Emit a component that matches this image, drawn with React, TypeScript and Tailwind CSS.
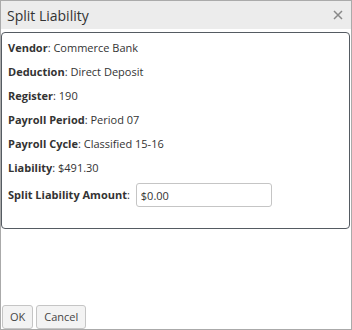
import React from 'react';

const rows: [string, string][] = [
  ['Vendor', 'Commerce Bank'],
  ['Deduction', 'Direct Deposit'],
  ['Register', '190'],
  ['Payroll Period', 'Period 07'],
  ['Payroll Cycle', 'Classified 15-16'],
  ['Liability', '$491.30'],
];

const App: React.FC = () => {
  return (
    <div
      className="w-[352px] h-[330px] bg-white border border-[#aaaaaa] flex flex-col text-[11px] text-[#333333]"
      style={{ fontFamily: '"Open Sans", "Liberation Sans", sans-serif' }}
    >
      {/* Title bar */}
      <div className="h-[28px] bg-[#ececec] flex items-center justify-between pl-[6px] pr-[8px] shrink-0">
        <span className="text-[14px] text-[#333333]">Split Liability</span>
        <svg width="10" height="10" viewBox="0 0 10 10" className="text-[#888888]">
          <path d="M1 1 L9 9 M9 1 L1 9" stroke="currentColor" strokeWidth="1.5" />
        </svg>
      </div>

      {/* Content */}
      <div className="flex-1 pt-[3px]">
        <div className="border border-[#555b62] rounded-[4px] mr-[1px] h-[197px] pl-[6px] pt-[3px]">
          {rows.map(([label, value]) => (
            <div key={label} className="h-[24px] flex items-center">
              <span className="font-bold">{label}</span>
              <span>: {value}</span>
            </div>
          ))}
          <div className="flex items-center mt-[3px]">
            <span className="font-bold">Split Liability Amount</span>
            <span>:</span>
            <input
              defaultValue="$0.00"
              className="ml-[6px] w-[136px] h-[24px] border border-[#c5c5c5] rounded-[3px] px-[4px] text-[11px] text-[#333333] outline-none"
            />
          </div>
        </div>
      </div>

      {/* Buttons */}
      <div className="flex gap-[3px] pl-[1px] shrink-0">
        <button className="h-[24px] px-[7px] bg-[#f3f3f3] border border-[#c5c5c5] rounded-[3px] text-[11px] text-[#454545]">
          OK
        </button>
        <button className="h-[24px] px-[7px] bg-[#f3f3f3] border border-[#c5c5c5] rounded-[3px] text-[11px] text-[#454545]">
          Cancel
        </button>
      </div>
    </div>
  );
};

export default App;
